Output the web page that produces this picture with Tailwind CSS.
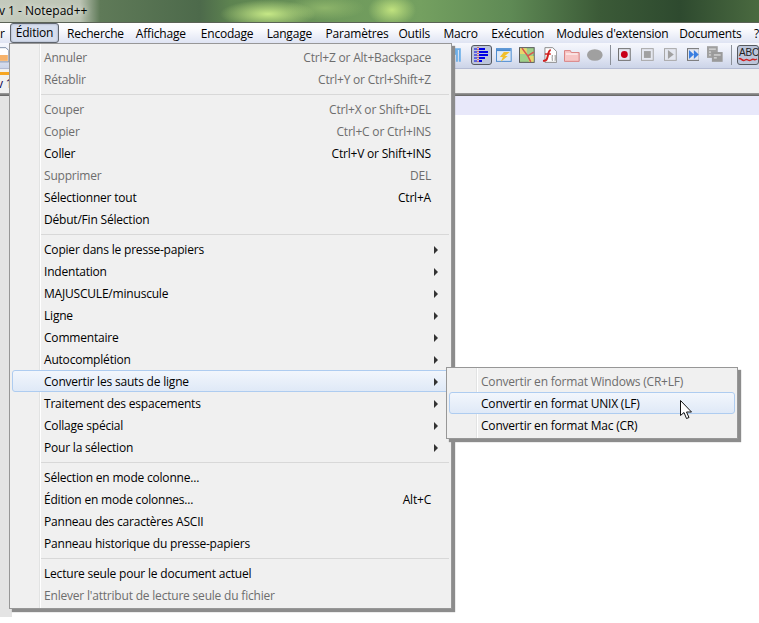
<!DOCTYPE html>
<html lang="fr">
<head>
    <meta charset="UTF-8">
    <title>Notepad++</title>
    <script src="https://cdn.jsdelivr.net/npm/@tailwindcss/browser@4"></script>
</head>
<body class="w-[759px] h-[623px] overflow-hidden bg-white relative font-['Open_Sans',sans-serif] text-[12px] tracking-[-0.2px] text-black">
    <!-- Title bar -->
    <div class="h-[22px] flex items-center overflow-hidden bg-[radial-gradient(ellipse_48px_14px_at_268px_14px,#c6e886,transparent),radial-gradient(ellipse_24px_16px_at_392px_10px,#c0e27e,transparent),radial-gradient(ellipse_40px_12px_at_325px_8px,#8db46a,transparent),linear-gradient(90deg,#c4cabd_0px,#bcc4b4_80px,#5f7a58_100px,#4d6a4b_200px,#5d8350_230px,#6f9a5c_340px,#74a060_420px,#5f8a55_510px,#3b5a37_600px,#2e4a2f_680px,#4a6a40_759px)]">
        <span class="whitespace-nowrap -ml-[1px] tracking-normal [text-shadow:0_0_6px_#fff]">v 1 - Notepad++</span>
    </div>
    <div class="h-px bg-[#5a6256]"></div>

    <!-- Menu bar -->
    <div class="h-[20px] pt-px flex items-center whitespace-nowrap bg-[linear-gradient(#fff,#fbfbfe_30%,#dfe4f3)]">
        <span class="w-[10px] overflow-hidden">r</span>
        <span class="w-[49px] h-[20px] -mt-px flex items-center justify-center rounded-[3px] border border-[#5f656e] bg-[#d6deee] shadow-[inset_0_0_2px_#8d96a8]">Édition</span>
        <span class="w-[77px] pl-[8px]">Recherche</span>
        <span class="w-[65px]">Affichage</span>
        <span class="w-[66px]">Encodage</span>
        <span class="w-[59px]">Langage</span>
        <span class="w-[73px]">Paramètres</span>
        <span class="w-[45px]">Outils</span>
        <span class="w-[48px]">Macro</span>
        <span class="w-[65px]">Exécution</span>
        <span class="w-[123px]">Modules d'extension</span>
        <span class="w-[75px]">Documents</span>
        <span>?</span>
    </div>

    <!-- Toolbar -->
    <div class="h-[26px] flex items-start pt-[2px] border-b border-[#b4bbd3] bg-[linear-gradient(#f7f8fd,#e6eaf6_45%,#ccd4e8)]">
        <svg class="w-[9px] h-[16px] mt-[2px]" viewBox="0 0 9 16"><path d="M-2 .5h8l3 3v11.500H-2z" fill="#fff" stroke="#7f8ea8"/><path d="M0 8h8v6H0z" fill="#f6b26b"/></svg>
        <svg class="w-[8px] h-[16px] ml-[444px] mt-[2px]" viewBox="0 0 8 16"><path d="M0 1h8v14H6V3H5v12H3V8C1 8 0 6 0 4.500Z" fill="#6fb0e8"/></svg>
        <div class="w-[22px] h-[20px] ml-[10px] flex items-center justify-center rounded-[3px] border border-[#55595f] bg-[#bcc5da]">
            <svg class="w-[15px] h-[16px]" viewBox="0 0 15 16"><path d="M4 0v16" stroke="#e01010" stroke-dasharray="1 1"/><path d="M0 2h3M0 5h3M0 8h3M0 11h3M0 14h3" stroke="#0000e0"/><path d="M5 1h6v2H5zM5 4h9v2H5zM5 7h9v2H5zM5 10h6v2H5zM5 13h3v2H5z" fill="#0000e6"/></svg>
        </div>
        <svg class="w-[16px] h-[16px] ml-[4px] mt-[2px]" viewBox="0 0 16 16"><rect x=".5" y="1.500" width="15" height="13" fill="#dfeaf7" stroke="#4a8ad0"/><path d="M1 2h14v2H1z" fill="#4a8ad0"/><path d="M8 5h6l-5 4h3l-7 6 2-5H4z" fill="#f2bf2c"/></svg>
        <svg class="w-[16px] h-[16px] ml-[7px] mt-[2px]" viewBox="0 0 16 16"><rect x=".5" y=".5" width="15" height="15" fill="#9fd08a" stroke="#555"/><path d="M1 1h7v6H1zM10 9h5v6h-5z" fill="#e8d66c"/><path d="M3 1l6 8 3 6M9 9l6-4" stroke="#d9534f" stroke-width="1.500" fill="none"/></svg>
        <svg class="w-[16px] h-[16px] ml-[7px] mt-[2px]" viewBox="0 0 16 16"><path d="M3 .5h8l4 4v11H3z" fill="#fff" stroke="#8a8a8a"/><path d="M9 3C6 3 7 7 5 12c-.5 1.500-2 2-4 2" stroke="#d02020" stroke-width="2" fill="none"/><path d="M3 7h6" stroke="#d02020" stroke-width="1.500"/><path d="M11 8c-1 0 0 3-1 3 1 0 0 3 1 3M13 8c1 0 0 3 1 3-1 0 0 3-1 3" stroke="#666" fill="none" stroke-width=".8"/></svg>
        <svg class="w-[16px] h-[14px] ml-[7px] mt-[3px]" viewBox="0 0 16 14"><path d="M.5 2.500h6l1 2h8v9H.5z" fill="#f7c6c6" stroke="#d98080"/><path d="M2 6h12" stroke="#fff"/></svg>
        <svg class="w-[16px] h-[12px] ml-[7px] mt-[4px]" viewBox="0 0 16 12"><ellipse cx="8" cy="6" rx="8" ry="6" fill="#a0a0a0"/></svg>
        <div class="w-px h-[20px] ml-[7px] bg-[#8a8f98]"></div>
        <svg class="w-[13px] h-[13px] ml-[8px] mt-[3px]" viewBox="0 0 13 13"><rect x=".5" y=".5" width="12" height="12" fill="#e4e7f0" stroke="#707070"/><circle cx="6.500" cy="6.500" r="3.500" fill="#c80018"/></svg>
        <svg class="w-[13px] h-[13px] ml-[10px] mt-[3px]" viewBox="0 0 13 13"><rect x=".5" y=".5" width="12" height="12" fill="#e4e7f0" stroke="#a6a6a6"/><rect x="3" y="3" width="7" height="7" fill="#a0a0a0"/></svg>
        <svg class="w-[13px] h-[13px] ml-[10px] mt-[3px]" viewBox="0 0 13 13"><rect x=".5" y=".5" width="12" height="12" fill="#e4e7f0" stroke="#a6a6a6"/><path d="M4 2l6 4.500-6 4.500z" fill="#a0a0a0"/></svg>
        <svg class="w-[13px] h-[13px] ml-[10px] mt-[3px]" viewBox="0 0 13 13"><rect x=".5" y=".5" width="12" height="12" fill="#e4e7f0" stroke="#707070"/><path d="M2 2l5 4.500-5 4.500zM7 2l5 4.500-5 4.500z" fill="#3a7ee0"/></svg>
        <svg class="w-[16px] h-[16px] ml-[8px] mt-[1px]" viewBox="0 0 16 16"><path d="M0 0h11v12H0z" fill="#a0a0a0"/><path d="M5 6h11v10H5z" fill="#9a9a9a"/><path d="M2 3h7M2 6h2M2 9h2M7 9h7M7 12h3" stroke="#eee"/></svg>
        <div class="w-px h-[20px] ml-[8px] bg-[#8a8f98]"></div>
        <div class="w-[22px] h-[20px] ml-[5px] shrink-0 rounded-[3px] border border-[#55595f] bg-[#bcc5da] overflow-hidden">
            <svg class="w-[20px] h-[18px]" viewBox="0 0 20 18"><path d="M1 13C3 11 4 16 7 14s3 2 6 0 3 1 6-1" stroke="#d02020" stroke-width="1.500" fill="none"/><text x="1" y="10" font-size="10" font-family="Liberation Sans" fill="#222">ABC</text></svg>
        </div>
    </div>

    <!-- Tab row -->
    <div class="h-[24px] bg-[#f0f0f0]">
        <div class="w-[10px] h-[3px] translate-y-[3px] bg-[#f6a623] float-left"></div>
        <div class="text-[#100050] whitespace-nowrap pt-[6px] -ml-[3px]">v 1</div>
    </div>
    <div class="h-[3px] bg-[linear-gradient(#a0a0a0,#606060)]"></div>

    <!-- Editor -->
    <div class="h-[521px] flex">
        <div class="w-[12px] bg-[#e4e4e4]"></div>
        <div class="flex-1">
            <div class="h-[19px] bg-[#e8e8fa]"></div>
        </div>
    </div>

    <!-- Edition menu -->
    <div class="absolute left-[9px] top-[43px] w-[443px] h-[566px] py-[2px] px-[2px] border border-[#979797] bg-[#f0f0f0] shadow-[3px_3px_1px_#8c8c8c]">
        <div class="absolute left-[29px] top-0 bottom-0 w-[2px] border-l border-[#e2e3e3] bg-white"></div>
        <div class="relative">
            <div class="flex items-center h-[22px] pt-px pl-[32px] pr-[18px] justify-between text-[#6d6d6d]"><span>Annuler</span><span>Ctrl+Z or Alt+Backspace</span></div>
            <div class="flex items-center h-[22px] pt-px pl-[32px] pr-[18px] justify-between text-[#6d6d6d]"><span>Rétablir</span><span>Ctrl+Y or Ctrl+Shift+Z</span></div>
            <div class="h-[8px] ml-[29px] flex items-center"><div class="w-full h-px bg-[#d8d8d8]"></div></div>
            <div class="flex items-center h-[22px] pt-px pl-[32px] pr-[18px] justify-between text-[#6d6d6d]"><span>Couper</span><span>Ctrl+X or Shift+DEL</span></div>
            <div class="flex items-center h-[22px] pt-px pl-[32px] pr-[18px] justify-between text-[#6d6d6d]"><span>Copier</span><span>Ctrl+C or Ctrl+INS</span></div>
            <div class="flex items-center h-[22px] pt-px pl-[32px] pr-[18px] justify-between"><span>Coller</span><span>Ctrl+V or Shift+INS</span></div>
            <div class="flex items-center h-[22px] pt-px pl-[32px] pr-[18px] justify-between text-[#6d6d6d]"><span>Supprimer</span><span>DEL</span></div>
            <div class="flex items-center h-[22px] pt-px pl-[32px] pr-[18px] justify-between"><span>Sélectionner tout</span><span>Ctrl+A</span></div>
            <div class="flex items-center h-[22px] pt-px pl-[32px] pr-[18px] justify-between"><span>Début/Fin Sélection</span></div>
            <div class="h-[8px] ml-[29px] flex items-center"><div class="w-full h-px bg-[#d8d8d8]"></div></div>
            <div class="flex items-center h-[22px] pt-px pl-[32px] pr-[11px] justify-between"><span>Copier dans le presse-papiers</span><span class="w-0 h-0 border-y-[4px] border-y-transparent border-l-[4px] border-l-[#333]"></span></div>
            <div class="flex items-center h-[22px] pt-px pl-[32px] pr-[11px] justify-between"><span>Indentation</span><span class="w-0 h-0 border-y-[4px] border-y-transparent border-l-[4px] border-l-[#333]"></span></div>
            <div class="flex items-center h-[22px] pt-px pl-[32px] pr-[11px] justify-between"><span>MAJUSCULE/minuscule</span><span class="w-0 h-0 border-y-[4px] border-y-transparent border-l-[4px] border-l-[#333]"></span></div>
            <div class="flex items-center h-[22px] pt-px pl-[32px] pr-[11px] justify-between"><span>Ligne</span><span class="w-0 h-0 border-y-[4px] border-y-transparent border-l-[4px] border-l-[#333]"></span></div>
            <div class="flex items-center h-[22px] pt-px pl-[32px] pr-[11px] justify-between"><span>Commentaire</span><span class="w-0 h-0 border-y-[4px] border-y-transparent border-l-[4px] border-l-[#333]"></span></div>
            <div class="flex items-center h-[22px] pt-px pl-[32px] pr-[11px] justify-between"><span>Autocomplétion</span><span class="w-0 h-0 border-y-[4px] border-y-transparent border-l-[4px] border-l-[#333]"></span></div>
            <div class="flex items-center h-[22px] pt-px pl-[31px] pr-[10px] justify-between rounded-[3px] border border-[#aeccf0] bg-[linear-gradient(#f2f6fc,#dfe9f7)]"><span>Convertir les sauts de ligne</span><span class="w-0 h-0 border-y-[4px] border-y-transparent border-l-[4px] border-l-[#333]"></span></div>
            <div class="flex items-center h-[22px] pt-px pl-[32px] pr-[11px] justify-between"><span>Traitement des espacements</span><span class="w-0 h-0 border-y-[4px] border-y-transparent border-l-[4px] border-l-[#333]"></span></div>
            <div class="flex items-center h-[22px] pt-px pl-[32px] pr-[11px] justify-between"><span>Collage spécial</span><span class="w-0 h-0 border-y-[4px] border-y-transparent border-l-[4px] border-l-[#333]"></span></div>
            <div class="flex items-center h-[22px] pt-px pl-[32px] pr-[11px] justify-between"><span>Pour la sélection</span><span class="w-0 h-0 border-y-[4px] border-y-transparent border-l-[4px] border-l-[#333]"></span></div>
            <div class="h-[8px] ml-[29px] flex items-center"><div class="w-full h-px bg-[#d8d8d8]"></div></div>
            <div class="flex items-center h-[22px] pt-px pl-[32px] pr-[18px] justify-between"><span>Sélection en mode colonne...</span></div>
            <div class="flex items-center h-[22px] pt-px pl-[32px] pr-[18px] justify-between"><span>Édition en mode colonnes...</span><span>Alt+C</span></div>
            <div class="flex items-center h-[22px] pt-px pl-[32px] pr-[18px] justify-between"><span>Panneau des caractères ASCII</span></div>
            <div class="flex items-center h-[22px] pt-px pl-[32px] pr-[18px] justify-between"><span>Panneau historique du presse-papiers</span></div>
            <div class="h-[8px] ml-[29px] flex items-center"><div class="w-full h-px bg-[#d8d8d8]"></div></div>
            <div class="flex items-center h-[22px] pt-px pl-[32px] pr-[18px] justify-between"><span>Lecture seule pour le document actuel</span></div>
            <div class="flex items-center h-[22px] pt-px pl-[32px] pr-[18px] justify-between text-[#6d6d6d]"><span>Enlever l'attribut de lecture seule du fichier</span></div>
        </div>
    </div>

    <!-- Line endings submenu -->
    <div class="absolute left-[446px] top-[367px] w-[292px] h-[72px] py-[2px] px-[2px] border border-[#979797] bg-[#f0f0f0] shadow-[3px_3px_1px_#8c8c8c]">
        <div class="absolute left-[29px] top-0 bottom-0 w-[2px] border-l border-[#e2e3e3] bg-white"></div>
        <div class="relative">
            <div class="flex items-center h-[22px] pt-px pl-[32px] text-[#6d6d6d]">Convertir en format Windows (CR+LF)</div>
            <div class="flex items-center h-[22px] pt-px pl-[31px] rounded-[3px] border border-[#aeccf0] bg-[linear-gradient(#f2f6fc,#dfe9f7)]">Convertir en format UNIX (LF)</div>
            <div class="flex items-center h-[22px] pt-px pl-[32px]">Convertir en format Mac (CR)</div>
        </div>
    </div>

    <!-- Mouse cursor -->
    <svg class="absolute left-[680px] top-[400px] w-[14px] h-[20px]" viewBox="0 0 14 20"><path d="M.5.500v15l3.500-3 2.500 6 2.500-1-2.500-5.500h5z" fill="#fff" stroke="#111"/></svg>
</body>
</html>
